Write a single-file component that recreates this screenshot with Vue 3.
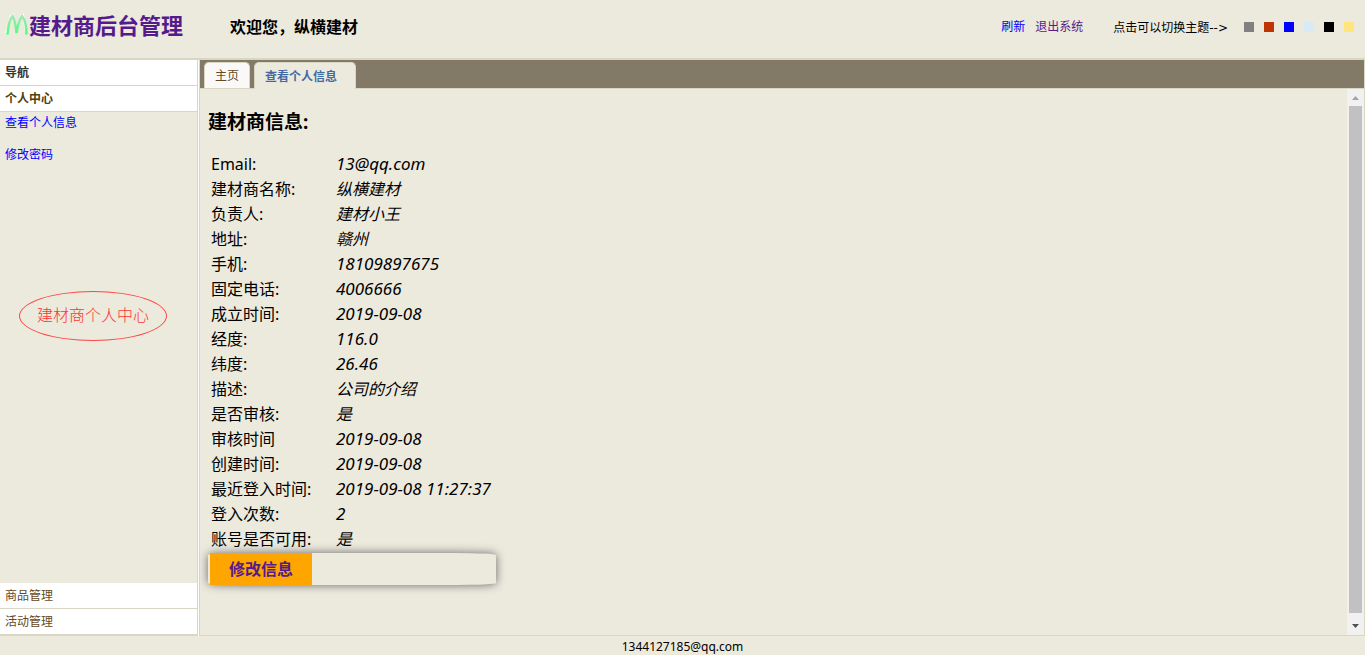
<script setup>
const themes = [
  { id: 'gray', label: '灰色主题' },
  { id: 'rust', label: '红色主题' },
  { id: 'blue', label: '蓝色主题' },
  { id: 'sky', label: '浅蓝主题' },
  { id: 'black', label: '黑色主题' },
  { id: 'yellow', label: '黄色主题' },
]
const info = [
  { name: 'Email:', value: '13@qq.com', latin: true },
  { name: '建材商名称:', value: '纵横建材' },
  { name: '负责人:', value: '建材小王' },
  { name: '地址:', value: '赣州' },
  { name: '手机:', value: '18109897675', latin: true },
  { name: '固定电话:', value: '4006666', latin: true },
  { name: '成立时间:', value: '2019-09-08', latin: true },
  { name: '经度:', value: '116.0', latin: true },
  { name: '纬度:', value: '26.46', latin: true },
  { name: '描述:', value: '公司的介绍' },
  { name: '是否审核:', value: '是' },
  { name: '审核时间', value: '2019-09-08', latin: true },
  { name: '创建时间:', value: '2019-09-08', latin: true },
  { name: '最近登入时间:', value: '2019-09-08 11:27:37', latin: true },
  { name: '登入次数:', value: '2', latin: true },
  { name: '账号是否可用:', value: '是' },
]
</script>

<template>
  <div class="page">
    <header class="header">
      <a class="brand" href="#">
        <svg class="logo" width="24" height="24" viewBox="0 0 24 24" aria-hidden="true">
          <defs>
            <linearGradient id="arch" gradientUnits="userSpaceOnUse" x1="0" y1="2" x2="0" y2="22">
              <stop offset="0" stop-color="#a5e8b8" />
              <stop offset="0.5" stop-color="#7df09a" />
              <stop offset="1" stop-color="#4dff7c" />
            </linearGradient>
          </defs>
          <path d="M1 20L6 3L8 2L11.500 15L16 3L18 2L21 18" fill="none" stroke="#fff" stroke-width="2" />
          <path d="M2.500 21.500C3 14 5 6 7.500 3C9.500 6 11 14 11.500 20C12.500 14 14.500 6 17 3C19.500 6 21.500 14 21.500 21.500" fill="none" stroke="url(#arch)" stroke-width="2.500" />
        </svg>
        <h1>建材商后台管理</h1>
      </a>
      <strong class="welcome">欢迎您，纵横建材</strong>
      <div class="tools">
        <a class="refresh" href="#">刷新</a>
        <a class="logout" href="#">退出系统</a>
        <span class="hint">点击可以切换主题--&gt;</span>
        <div class="swatches">
          <button v-for="t in themes" :key="t.id" type="button" :class="['swatch', t.id]" :aria-label="t.label"></button>
        </div>
      </div>
    </header>

    <div class="body">
      <aside class="sidebar">
        <h2 class="bar title">导航</h2>
        <button type="button" class="bar open">个人中心</button>
        <nav class="panel">
          <a href="#">查看个人信息</a>
          <a href="#">修改密码</a>
          <div class="mark">建材商个人中心</div>
        </nav>
        <button type="button" class="bar">商品管理</button>
        <button type="button" class="bar last">活动管理</button>
      </aside>

      <main class="main">
        <div class="tabs">
          <button type="button" class="tab">主页</button>
          <button type="button" class="tab active">查看个人信息</button>
        </div>
        <div class="view">
          <section class="content">
            <h3>建材商信息:</h3>
            <div class="details">
              <table>
                <tbody>
                  <tr v-for="row in info" :key="row.name">
                    <th scope="row">{{ row.name }}</th>
                    <td><i :class="{ latin: row.latin }">{{ row.value }}</i></td>
                  </tr>
                </tbody>
              </table>
              <div class="actions"><a href="#">修改信息</a></div>
            </div>
          </section>
          <div class="scroll" aria-hidden="true">
            <svg width="17" height="17" viewBox="0 0 17 17"><path d="M5 11h7L8.500 7z" fill="#a3a3a3" /></svg>
            <div class="thumb"></div>
            <svg width="17" height="22" viewBox="0 0 17 22"><path d="M5 11h7L8.500 15z" fill="#505050" /></svg>
          </div>
        </div>
      </main>
    </div>
    <footer class="footer">1344127185@qq.com</footer>
  </div>
</template>

<style>
body {
  background: #ece9dd;
}
</style>

<style scoped>
* {
  box-sizing: border-box;
}
.page {
  display: flex;
  flex-direction: column;
  min-height: 100vh;
  background: #ece9dd;
  color: #000;
  font-family: "Noto Sans", "Noto Sans CJK SC", sans-serif;
  font-size: 12px;
}
a {
  text-decoration: none;
  color: #00f;
}
button {
  border: 0;
  margin: 0;
  font: inherit;
  cursor: pointer;
}
.header {
  display: flex;
  align-items: center;
  height: 60px;
  padding: 0 11px 6px 5px;
  border-bottom: 2px solid #d9d6c3;
}
.brand {
  display: flex;
  align-items: center;
  width: 225px;
  margin-bottom: 2px;
  color: #551a8b;
}
h1 {
  margin: 0;
  font-size: 22px;
  line-height: 30px;
}
.welcome {
  font-size: 16px;
}
.tools {
  display: flex;
  align-items: center;
  margin-left: auto;
}
.logout {
  margin: 0 30px 0 10px;
  color: #551a8b;
}
.hint {
  font-family: "DejaVu Sans", "Noto Sans CJK SC", sans-serif;
}
.swatches {
  display: flex;
  gap: 10px;
  margin: 2px 0 0 16px;
}
.swatch {
  width: 10px;
  height: 10px;
  padding: 0;
}
.gray { background: #808080; }
.rust { background: #bd3502; }
.blue { background: #00f; }
.sky { background: #d9eaf7; }
.black { background: #000; }
.yellow { background: #ffe57d; }
.body {
  display: flex;
  flex: 1;
}
.sidebar {
  display: flex;
  flex-direction: column;
  width: 199px;
  border-right: 1px solid #fff;
  box-shadow: inset -1px 0 #d9d6c3;
  padding-right: 1px;
}
.bar {
  height: 26px;
  margin: 0;
  padding: 0 5px;
  border-bottom: 1px solid #d9d6c3;
  background: #fff;
  color: #644a1d;
  font-size: 12px;
  line-height: 25px;
  text-align: left;
}
.title {
  color: #333;
  font-weight: bold;
}
.open {
  color: #53400f;
  font-weight: bold;
}
.last {
  height: 27px;
  border-bottom-width: 2px;
}
.panel {
  display: flex;
  flex: 1;
  flex-direction: column;
  align-items: flex-start;
  gap: 16px;
  padding: 3px 5px;
  line-height: 16px;
}
.mark {
  width: 148px;
  height: 50px;
  margin: 112px 0 0 14px;
  border: 1px solid #f44;
  border-radius: 50%;
  color: #f33;
  font-size: 16px;
  font-weight: 300;
  line-height: 46px;
  text-align: center;
}
.main {
  display: flex;
  flex: 1;
  flex-direction: column;
  border: 1px solid #d9d6c3;
  border-top: 0;
}
.tabs {
  display: flex;
  align-items: flex-end;
  gap: 4px;
  height: 29px;
  padding-left: 4px;
  border-bottom: 1px solid #d9d6c3;
  background: #827966;
}
.tab {
  height: 26px;
  padding: 0 10px;
  border: 1px solid #d9d6c3;
  border-bottom: 0;
  border-radius: 5px 5px 0 0;
  background: #faf9f7;
  color: #644a1d;
  line-height: 25px;
}
.active {
  height: 27px;
  margin-bottom: -1px;
  padding: 0 18px 0 10px;
  background: #ece9dd;
  color: #416aa3;
  font-weight: bold;
}
.view {
  display: flex;
  flex: 1;
}
.content {
  flex: 1;
  padding: 19px 8px 0;
}
h3 {
  margin: 0 0 15px;
  font-size: 19px;
  line-height: 28px;
}
.details {
  width: 288px;
  font-size: 16px;
  line-height: 21px;
}
table {
  width: 100%;
  border-spacing: 2px;
}
th, td {
  height: 23px;
  padding: 1px;
  font-weight: normal;
  text-align: left;
  white-space: nowrap;
}
th {
  width: 123px;
}
.latin {
  font-size: 17px;
  line-height: 16px;
}
.actions {
  height: 32px;
  padding-left: 2px;
  border-radius: 40px / 2px;
  box-shadow: 0 0 10px #666;
}
.actions a {
  display: block;
  width: 102px;
  height: 32px;
  background: #ffa500;
  color: #551a8b;
  font-weight: bold;
  line-height: 32px;
  text-align: center;
}
.scroll {
  display: flex;
  flex-direction: column;
  width: 17px;
  background: #f1f1f1;
}
.thumb {
  flex: 1;
  margin: 0 2px;
  background: #c1c1c1;
}
.footer {
  height: 19px;
  line-height: 22px;
  text-align: center;
}
</style>
